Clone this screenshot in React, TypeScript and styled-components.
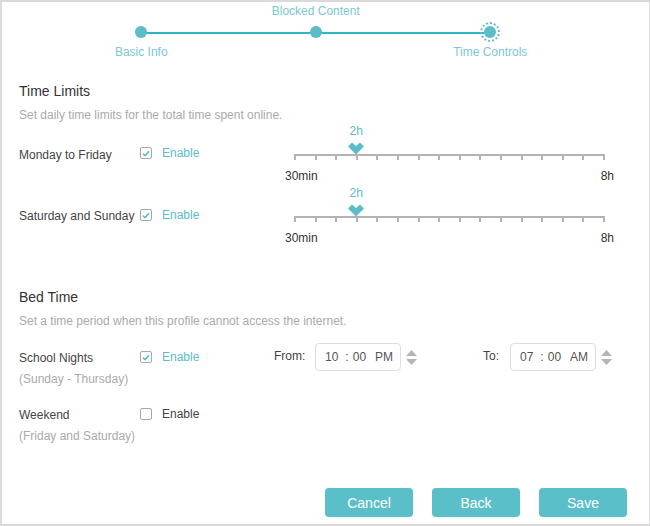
import React from "react";
import styled, { createGlobalStyle } from "styled-components";

const Global = createGlobalStyle`
  html, body { margin: 0; padding: 0; background: #fff; }
  body { font-family: "Liberation Sans", Arial, sans-serif; }
  * { box-sizing: border-box; }
`;

const TEAL = "#5bbdc8";
const STEP_TEXT = "#7dc7d1";

const Frame = styled.div`
  width: 650px;
  height: 526px;
  border-top: 2px solid #d9d9d9;
  border-bottom: 2px solid #d9d9d9;
  border-left: 2px solid #dcdcdc;
  border-right: 1px solid #dcdcdc;
  display: flex;
  flex-direction: column;
  padding: 2px 0 7px 0;
  overflow: hidden;
`;

/* ---------- Stepper ---------- */
const Stepper = styled.div`
  margin-left: 52px;
  width: 523.5px;
  display: grid;
  grid-template-columns: repeat(3, 174.5px);
  grid-template-rows: auto auto auto;
  position: relative;
  &::before {
    content: "";
    position: absolute;
    left: 87px;
    right: 87px;
    top: 28px;
    height: 2px;
    background: #2fb6c6;
  }
`;

const StepTop = styled.div`
  grid-row: 1;
  height: 14px;
  text-align: center;
  font-size: 12px;
  line-height: 14px;
  color: ${STEP_TEXT};
  white-space: nowrap;
`;

const StepDotCell = styled.div`
  grid-row: 2;
  margin-top: 6px;
  display: flex;
  justify-content: center;
  align-items: center;
  height: 16px;
  position: relative;
  z-index: 1;
`;

const Dot = styled.div<{ $current?: boolean }>`
  width: 12px;
  height: 12px;
  border-radius: 50%;
  background: ${TEAL};
  ${(p) =>
    p.$current &&
    `outline: 2px dotted ${TEAL};
     outline-offset: 2px;`}
`;

const StepBottom = styled.div`
  grid-row: 3;
  height: 14px;
  margin-top: 5px;
  text-align: center;
  font-size: 12px;
  line-height: 14px;
  color: ${STEP_TEXT};
  white-space: nowrap;
`;

/* ---------- Content ---------- */
const Content = styled.div`
  padding-left: 17px;
  display: flex;
  flex-direction: column;
`;

const SectionTitle = styled.div<{ $top: number }>`
  margin-top: ${(p) => p.$top}px;
  font-size: 14px;
  line-height: 17px;
  color: #333;
`;

const SectionDesc = styled.div`
  margin-top: 8px;
  font-size: 12px;
  line-height: 14px;
  color: #aaa;
`;

const LimitRow = styled.div<{ $top: number }>`
  margin-top: ${(p) => p.$top}px;
  display: grid;
  grid-template-columns: 121px 145px 329px;
  align-items: start;
`;

const RowLabel = styled.div<{ $pad: number }>`
  padding-top: ${(p) => p.$pad}px;
  font-size: 12px;
  line-height: 14px;
  color: #444;
  white-space: nowrap;
`;

const SubLabel = styled.div`
  margin-top: 7px;
  font-size: 12px;
  line-height: 14px;
  color: #aaa;
  white-space: nowrap;
`;

const CheckWrap = styled.label<{ $pad: number }>`
  padding-top: ${(p) => p.$pad}px;
  display: flex;
  align-items: center;
  gap: 10px;
`;

const Box = styled.span`
  width: 12px;
  height: 12px;
  border: 1px solid #a8a8a8;
  border-radius: 2px;
  background: #fff;
  display: flex;
  align-items: center;
  justify-content: center;
  flex: none;
`;

const EnableText = styled.span<{ $checked?: boolean }>`
  font-size: 12px;
  line-height: 14px;
  color: ${(p) => (p.$checked ? TEAL : "#444")};
`;

function Check({ checked, pad }: { checked: boolean; pad: number }) {
  return (
    <CheckWrap $pad={pad}>
      <Box>
        {checked && (
          <svg width="8" height="7" viewBox="0 0 8 7">
            <path d="M1 3.6 L3.1 5.6 L7 1.2" fill="none" stroke={TEAL} strokeWidth="1.6" />
          </svg>
        )}
      </Box>
      <EnableText $checked={checked}>Enable</EnableText>
    </CheckWrap>
  );
}

/* ---------- Slider ---------- */
const Slider = styled.div`
  width: 329px;
  display: flex;
  flex-direction: column;
`;

const ValueRow = styled.div`
  position: relative;
  height: 14px;
  margin: 0 9px;
`;

const ValueLabel = styled.span`
  position: absolute;
  top: 0;
  transform: translateX(-50%);
  font-size: 12px;
  line-height: 14px;
  color: ${TEAL};
`;

const TrackWrap = styled.div`
  position: relative;
  height: 18px;
  margin: 4px 9px 0 9px;
`;

const Thumb = styled.svg`
  position: absolute;
  top: 0;
  transform: translateX(-50%);
`;

const Line = styled.div`
  position: absolute;
  left: 0;
  right: 0;
  top: 12px;
  height: 2px;
  background: #b3b3b3;
`;

const Ticks = styled.div`
  position: absolute;
  left: 0;
  right: 0;
  top: 14px;
  display: flex;
  justify-content: space-between;
`;

const Tick = styled.span`
  width: 2px;
  height: 4px;
  background: #b3b3b3;
`;

const EndLabels = styled.div`
  margin-top: 9px;
  display: flex;
  justify-content: space-between;
  font-size: 12px;
  line-height: 14px;
  color: #333;
`;

function TimeSlider({ value }: { value: number }) {
  const pct = ((value - 0.5) / 7.5) * 100;
  return (
    <Slider>
      <ValueRow>
        <ValueLabel style={{ left: `${pct}%` }}>{value}h</ValueLabel>
      </ValueRow>
      <TrackWrap>
        <Line />
        <Ticks>
          {Array.from({ length: 16 }).map((_, i) => (
            <Tick key={i} />
          ))}
        </Ticks>
        <Thumb style={{ left: `${pct}%` }} width="16" height="13" viewBox="0 0 16 13">
          <path d="M0 4.5 L4 0.5 L8 4 L12 0.5 L16 4.5 L8 12.5 Z" fill={TEAL} />
        </Thumb>
      </TrackWrap>
      <EndLabels>
        <span>30min</span>
        <span>8h</span>
      </EndLabels>
    </Slider>
  );
}

/* ---------- Bed time ---------- */
const BedRow = styled.div<{ $top: number }>`
  margin-top: ${(p) => p.$top}px;
  display: grid;
  grid-template-columns: 121px 134px 209px auto;
  align-items: start;
`;

const LabelCol = styled.div`
  padding-top: 8px;
  display: flex;
  flex-direction: column;
`;

const TimeField = styled.div`
  display: flex;
  align-items: center;
  height: 28px;
`;

const FieldLabel = styled.span<{ $w: number }>`
  width: ${(p) => p.$w}px;
  font-size: 12px;
  line-height: 14px;
  color: #444;
  margin-top: -2px;
`;

const TimeBox = styled.div`
  width: 86px;
  height: 28px;
  border: 1px solid #dedede;
  border-radius: 4px;
  display: flex;
  align-items: center;
  padding-left: 9px;
  font-size: 12px;
  color: #555;
`;

const Part = styled.span<{ $ml?: number }>`
  margin-left: ${(p) => p.$ml ?? 0}px;
`;

const Spinner = styled.div`
  margin-left: 5px;
  display: flex;
  flex-direction: column;
  gap: 3px;
`;

function TimeInput({ label, w, h, m, ap }: { label: string; w: number; h: string; m: string; ap: string }) {
  return (
    <TimeField>
      <FieldLabel $w={w}>{label}</FieldLabel>
      <TimeBox>
        <Part>{h}</Part>
        <Part $ml={7}>:</Part>
        <Part $ml={4}>{m}</Part>
        <Part $ml={9}>{ap}</Part>
      </TimeBox>
      <Spinner>
        <svg width="11" height="6" viewBox="0 0 11 6">
          <path d="M5.5 0 L11 6 L0 6 Z" fill="#b5b5b5" />
        </svg>
        <svg width="11" height="6" viewBox="0 0 11 6">
          <path d="M0 0 L11 0 L5.5 6 Z" fill="#b5b5b5" />
        </svg>
      </Spinner>
    </TimeField>
  );
}

/* ---------- Footer ---------- */
const Footer = styled.div`
  margin-top: auto;
  display: flex;
  justify-content: flex-end;
  gap: 19px;
  padding-right: 22px;
`;

const Button = styled.button`
  width: 88px;
  height: 29px;
  border: none;
  border-radius: 4px;
  background: #5bbfca;
  color: #fff;
  font-family: "Liberation Sans", Arial, sans-serif;
  font-size: 14px;
  cursor: pointer;
  padding: 0;
`;

export default function App() {
  return (
    <>
      <Global />
      <Frame>
        <Stepper>
          <StepTop />
          <StepTop>Blocked Content</StepTop>
          <StepTop />
          <StepDotCell>
            <Dot />
          </StepDotCell>
          <StepDotCell>
            <Dot />
          </StepDotCell>
          <StepDotCell>
            <Dot $current />
          </StepDotCell>
          <StepBottom>Basic Info</StepBottom>
          <StepBottom />
          <StepBottom>Time Controls</StepBottom>
        </Stepper>
        <Content>
          <SectionTitle $top={24}>Time Limits</SectionTitle>
          <SectionDesc>Set daily time limits for the total time spent online.</SectionDesc>
          <LimitRow $top={2}>
            <RowLabel $pad={24}>Monday to Friday</RowLabel>
            <Check checked pad={22} />
            <TimeSlider value={2} />
          </LimitRow>
          <LimitRow $top={3}>
            <RowLabel $pad={23}>Saturday and Sunday</RowLabel>
            <Check checked pad={22} />
            <TimeSlider value={2} />
          </LimitRow>

          <SectionTitle $top={44}>Bed Time</SectionTitle>
          <SectionDesc>Set a time period when this profile cannot access the internet.</SectionDesc>
          <BedRow $top={15}>
            <LabelCol>
              <RowLabel $pad={0}>School Nights</RowLabel>
              <SubLabel>(Sunday - Thursday)</SubLabel>
            </LabelCol>
            <Check checked pad={7} />
            <TimeInput label="From:" w={41} h="10" m="00" ap="PM" />
            <TimeInput label="To:" w={27} h="07" m="00" ap="AM" />
          </BedRow>
          <BedRow $top={14}>
            <LabelCol>
              <RowLabel $pad={0}>Weekend</RowLabel>
              <SubLabel>(Friday and Saturday)</SubLabel>
            </LabelCol>
            <Check checked={false} pad={7} />
          </BedRow>
        </Content>
        <Footer>
          <Button>Cancel</Button>
          <Button>Back</Button>
          <Button>Save</Button>
        </Footer>
      </Frame>
    </>
  );
}
